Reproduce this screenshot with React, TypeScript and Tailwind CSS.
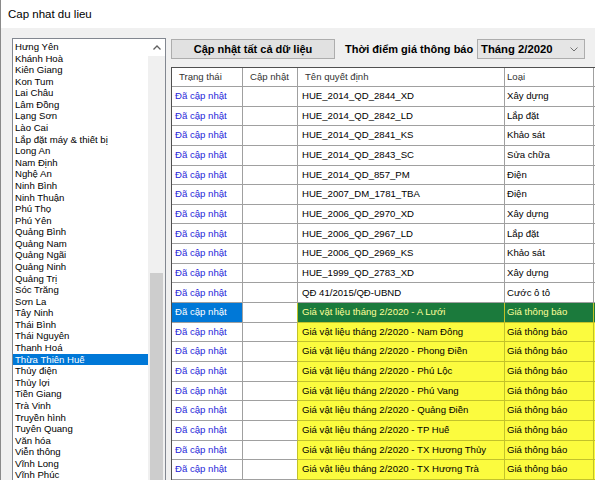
import React from "react";

const provinces = [
  "Hưng Yên","Khánh Hoà","Kiên Giang","Kon Tum","Lai Châu","Lâm Đồng","Lạng Sơn","Lào Cai",
  "Lắp đặt máy & thiết bị","Long An","Nam Định","Nghệ An","Ninh Bình","Ninh Thuận","Phú Thọ",
  "Phú Yên","Quảng Bình","Quảng Nam","Quảng Ngãi","Quảng Ninh","Quảng Trị","Sóc Trăng","Sơn La",
  "Tây Ninh","Thái Bình","Thái Nguyên","Thanh Hoá","Thừa Thiên Huế","Thủy điện","Thủy lợi",
  "Tiền Giang","Trà Vinh","Truyền hình","Tuyên Quang","Văn hóa","Viễn thông","Vĩnh Long","Vĩnh Phúc",
];

type Row = { name: string; type: string; kind: "normal" | "selected" | "yellow" };

const normal: [string, string][] = [
  ["HUE_2014_QD_2844_XD", "Xây dựng"],
  ["HUE_2014_QD_2842_LD", "Lắp đặt"],
  ["HUE_2014_QD_2841_KS", "Khảo sát"],
  ["HUE_2014_QD_2843_SC", "Sửa chữa"],
  ["HUE_2014_QD_857_PM", "Điện"],
  ["HUE_2007_DM_1781_TBA", "Điện"],
  ["HUE_2006_QD_2970_XD", "Xây dựng"],
  ["HUE_2006_QD_2967_LD", "Lắp đặt"],
  ["HUE_2006_QD_2969_KS", "Khảo sát"],
  ["HUE_1999_QD_2783_XD", "Xây dựng"],
  ["QĐ 41/2015/QĐ-UBND", "Cước ô tô"],
];
const areas = ["A Lưới","Nam Đông","Phong Điền","Phú Lộc","Phú Vang","Quảng Điền","TP Huế","TX Hương Thủy","TX Hương Trà"];

const rows: Row[] = [
  ...normal.map(([name, type]) => ({ name, type, kind: "normal" as const })),
  ...areas.map((a, i) => ({
    name: `Giá vật liệu tháng 2/2020 - ${a}`,
    type: "Giá thông báo",
    kind: (i === 0 ? "selected" : "yellow") as Row["kind"],
  })),
];

function GridRow({ r }: { r: Row }) {
  const sel = r.kind === "selected";
  const yel = r.kind === "yellow";
  const hi = sel || yel;
  const hiBg = sel ? "bg-[#1b7a3c] text-[#ffff9a]" : yel ? "bg-[#fbfb3e] text-black" : "bg-white text-black";
  const hiBorder = hi ? "border-[#c2c22a]" : "border-[#a0a0a0]";
  return (
    <div className="flex h-[19.65px]">
      <div
        className={`w-[71px] shrink-0 flex items-center pl-[3px] border-r border-b border-[#a0a0a0] ${
          sel ? "bg-[#0078d7] text-white" : "bg-white text-[#2626d9]"
        }`}
      >
        Đã cập nhật
      </div>
      <div className={`w-[55px] shrink-0 bg-white border-b border-[#a0a0a0] border-r ${hi ? "border-r-[#c2c22a]" : ""}`} />
      <div className={`w-[207px] shrink-0 flex items-center pl-[4px] border-r border-b ${hiBorder} ${hiBg} whitespace-nowrap`}>
        {r.name}
      </div>
      <div className={`w-[89px] shrink-0 flex items-center pl-[2px] border-r border-b ${hiBorder} ${hiBg} whitespace-nowrap`}>
        {r.type}
      </div>
      <div className={`w-[60px] shrink-0 border-b ${hiBorder} ${hi ? hiBg : "bg-white"}`} />
    </div>
  );
}

export default function App() {
  return (
    <div className="w-[595px] h-[480px] overflow-hidden bg-[#f0f0f0] border-l border-[#8a8a8a] font-['Liberation_Sans',Arial,sans-serif] flex flex-col">
      <div className="h-[28px] shrink-0 bg-white flex items-center pl-[7px] pt-[2px] text-[11.5px] text-black">
        Cap nhat du lieu
      </div>
      <div className="flex pl-[11px] pt-[10px] flex-1 min-h-0">
        {/* list box */}
        <div className="w-[154px] shrink-0 h-[460px] border border-[#828790] bg-white flex">
          <div className="w-[135px] shrink-0 pt-[2px] text-[9.6px] text-black">
            {provinces.map((p) => (
              <div
                key={p}
                className={`h-[11.58px] leading-[11.58px] pl-[2px] whitespace-nowrap ${
                  p === "Thừa Thiên Huế" ? "bg-[#0078d7] text-white" : ""
                }`}
              >
                {p}
              </div>
            ))}
          </div>
          <div className="w-[17px] shrink-0 bg-[#f0f0f0] flex flex-col">
            <div className="h-[17px] shrink-0 bg-white flex items-center justify-center">
              <svg width="8" height="5" viewBox="0 0 8 5">
                <polyline points="0.5,4.5 4,1 7.5,4.5" fill="none" stroke="#606060" strokeWidth="1.3" />
              </svg>
            </div>
            <div className="h-[217px] shrink-0" />
            <div className="flex-1 ml-[2px] w-[13px] bg-[#cdcdcd]" />
          </div>
        </div>

        {/* right panel */}
        <div className="ml-[5px] flex flex-col">
          <div className="flex items-center pt-[1px]">
            <div className="w-[164px] h-[20px] border border-[#adadad] bg-[#e1e1e1] flex items-center justify-center text-[11px] font-bold text-black">
              Cập nhật tất cả dữ liệu
            </div>
            <div className="ml-[10px] w-[132px] text-[11px] font-bold text-black whitespace-nowrap">
              Thời điểm giá thông báo
            </div>
            <div className="w-[108px] h-[20px] border border-[#adadad] bg-[#e5e5e5] flex items-center pl-[3px] pr-[6px] text-[11.3px] font-bold text-black">
              <span className="flex-1">Tháng 2/2020</span>
              <svg width="8" height="5" viewBox="0 0 8 5">
                <polyline points="0.5,0.5 4,4 7.5,0.5" fill="none" stroke="#707070" strokeWidth="1" />
              </svg>
            </div>
          </div>

          <div className="mt-[8px] w-[490px] border-l border-t border-[#505050] bg-white text-[9.6px]">
            <div className="flex h-[19px] text-[#333]">
              <div className="w-[71px] shrink-0 flex items-center pl-[7px] border-r border-b border-[#a0a0a0]">Trạng thái</div>
              <div className="w-[55px] shrink-0 flex items-center pl-[7px] border-r border-b border-[#a0a0a0]">Cập nhật</div>
              <div className="w-[207px] shrink-0 flex items-center pl-[7px] border-r border-b border-[#a0a0a0]">Tên quyết định</div>
              <div className="w-[89px] shrink-0 flex items-center pl-[2px] border-r border-b border-[#a0a0a0]">Loại</div>
              <div className="w-[60px] shrink-0 border-b border-[#a0a0a0]" />
            </div>
            {rows.map((r, i) => (
              <GridRow key={i} r={r} />
            ))}
          </div>
        </div>
      </div>
    </div>
  );
}
